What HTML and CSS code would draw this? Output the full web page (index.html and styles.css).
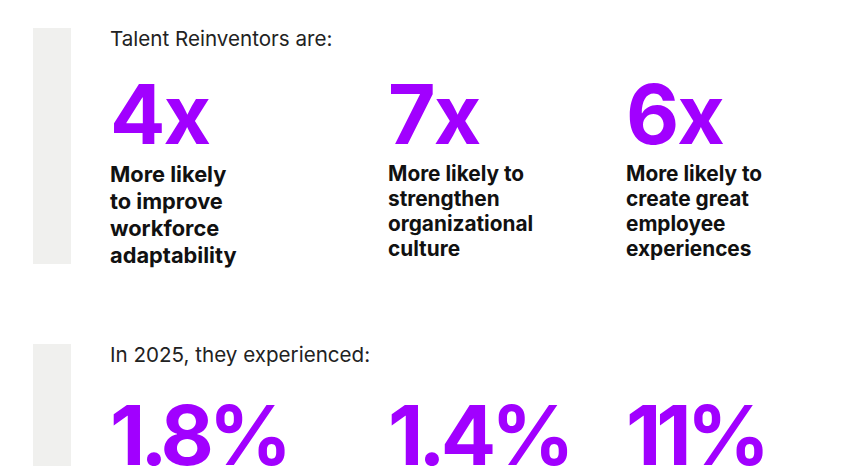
FILE: index.html
```html
<!DOCTYPE html>
<html lang="en">
<head>
<meta charset="utf-8">
<title>Talent Reinventors</title>
<link rel="stylesheet" href="styles.css">
</head>
<body>
  <section class="block block-first">
    <div class="bar"></div>
    <div class="content">
      <p class="intro">Talent Reinventors are:</p>
      <div class="stats">
        <div class="stat stat-1">
          <div class="num">4x</div>
          <p class="desc desc-lg">More likely<br>to improve<br>workforce<br>adaptability</p>
        </div>
        <div class="stat stat-2">
          <div class="num">7x</div>
          <p class="desc">More likely to<br>strengthen<br>organizational<br>culture</p>
        </div>
        <div class="stat stat-3">
          <div class="num">6x</div>
          <p class="desc">More likely to<br>create great<br>employee<br>experiences</p>
        </div>
      </div>
    </div>
  </section>
  <section class="block block-second">
    <div class="bar"></div>
    <div class="content">
      <p class="intro">In 2025, they experienced:</p>
      <div class="stats">
        <div class="stat stat-1"><div class="num num-pct">1.8%</div></div>
        <div class="stat stat-2"><div class="num num-pct">1.4%</div></div>
        <div class="stat stat-3"><div class="num num-pct">11%</div></div>
      </div>
    </div>
  </section>
</body>
</html>
```
FILE: styles.css
```css
html, body {
  margin: 0;
  padding: 0;
  background: #ffffff;
  overflow: hidden;
}
body {
  width: 860px;
  height: 466px;
  font-family: Inter, "Noto Sans", "Liberation Sans", sans-serif;
  color: #111111;
}
.block {
  display: flex;
  padding-left: 33px;
}
.block-first {
  margin-top: 28px;
  height: 236px;
}
.block-second {
  margin-top: 80px;
  height: 140px;
}
.bar {
  width: 38px;
  flex: none;
  background: #f0f0ee;
}
.content {
  margin-left: 39px;
  flex: 1;
}
.intro {
  margin: 0;
  font-size: 20.6px;
  line-height: 21px;
  font-weight: 400;
  color: #222222;
}
.stats {
  display: grid;
  grid-template-columns: 278px 238px 1fr;
}
.num {
  font-size: 82px;
  font-weight: 700;
  line-height: 80px;
  color: #a100ff;
  letter-spacing: -2px;
  margin-top: 26px;
}
.num-pct {
  letter-spacing: -5px;
  margin-top: 31px;
}
.desc {
  margin: 6px 0 0;
  font-size: 20.8px;
  line-height: 25px;
  font-weight: 700;
  color: #111111;
}
.desc-lg {
  font-size: 21.8px;
  line-height: 27px;
  margin-top: 6px;
}
```
